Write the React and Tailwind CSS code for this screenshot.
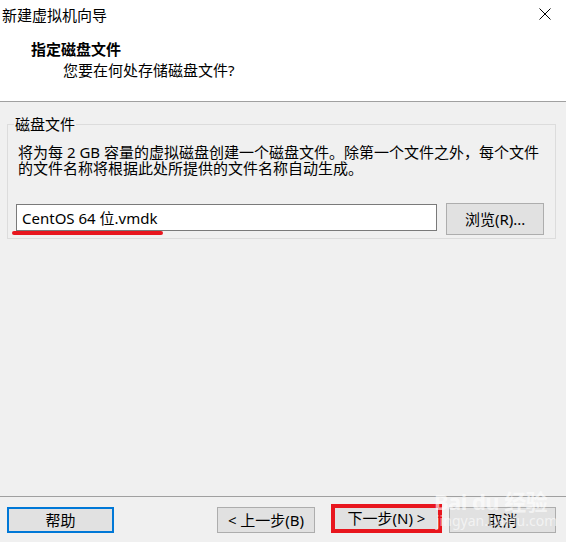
export default function App() {
  const font = { fontFamily: '"Noto Sans", "Noto Sans CJK SC", sans-serif' };
  return (
    <div
      className="relative w-[566px] h-[542px] bg-[#f0f0f0] flex flex-col text-black text-[15px] overflow-hidden"
      style={font}
    >
      {/* Header */}
      <div className="h-[102px] bg-white border-b border-[#a0a0a0] flex flex-col">
        <div className="h-[30px] flex items-center justify-between pl-[2px] pr-[15px]">
          <span className="leading-[20px]">新建虚拟机向导</span>
          <svg width="12" height="12" viewBox="0 0 12 12" className="mt-[-2px]">
            <path d="M0.5 0.5 L11.5 11.5 M11.5 0.5 L0.5 11.5" stroke="#000" strokeWidth="1" />
          </svg>
        </div>
        <div className="mt-[9px] pl-[31px] leading-[20px] font-bold">指定磁盘文件</div>
        <div className="mt-[1px] pl-[63px] leading-[20px]">您要在何处存储磁盘文件?</div>
      </div>

      {/* Group box */}
      <fieldset className="mt-[12px] ml-[7px] w-[549px] border border-[#dcdcdc] pl-[8px] pr-[11px] pt-[10px] pb-[3px] min-w-0">
        <legend className="ml-[-2px] px-[1px] leading-[20px]">磁盘文件</legend>
        <div className="ml-[2px] leading-[16px]">
          <div>将为每 2 GB 容量的虚拟磁盘创建一个磁盘文件。除第一个文件之外，每个文件</div>
          <div>的文件名称将根据此处所提供的文件名称自动生成。</div>
        </div>
        <div className="relative mt-[27px] flex items-start">
          <div className="mt-[1px] w-[422px] h-[27px] bg-white border border-[#7a7a7a] flex items-center pl-[5px] leading-[20px]">
            CentOS 64 位.vmdk
          </div>
          <div className="ml-[9px] w-[98px] h-[32px] bg-[#e1e1e1] border border-[#adadad] flex items-center justify-center">
            浏览(R)...
          </div>
          <div className="absolute left-[-4px] top-[28px] w-[151px] h-[4px] rounded-full bg-[#e8161e]" />
        </div>
      </fieldset>

      <div className="flex-1" />

      {/* Footer */}
      <div className="h-[46px] border-t border-[#a0a0a0] flex items-start pl-[7px] pt-[10px]">
        <div className="w-[107px] h-[26px] bg-[#e1e1e1] border-2 border-[#0078d7] flex items-center justify-center">
          帮助
        </div>
        <div className="ml-[103px] w-[98px] h-[26px] bg-[#e1e1e1] border border-[#adadad] flex items-center justify-center">
          &lt; 上一步(B)
        </div>
        <div className="ml-[16px] mt-[-3px] w-[111px] h-[29px] bg-[#e1e1e1] border-[4px] border-[#e8161e] flex items-center justify-center">
          下一步(N) &gt;
        </div>
        <div className="ml-[7px] w-[107px] h-[26px] bg-[#e1e1e1] border border-[#adadad] flex items-center justify-center">
          取消
        </div>
      </div>

      {/* Watermark */}
      <div className="absolute left-[434px] top-[489px] flex flex-col items-start pointer-events-none text-white/60">
        <div className="text-[22px] font-bold leading-[24px] tracking-tight">Bai du 经验</div>
        <div className="text-[14px] leading-[16px] ml-[2px]">jingyan.baidu.com</div>
      </div>
    </div>
  );
}
